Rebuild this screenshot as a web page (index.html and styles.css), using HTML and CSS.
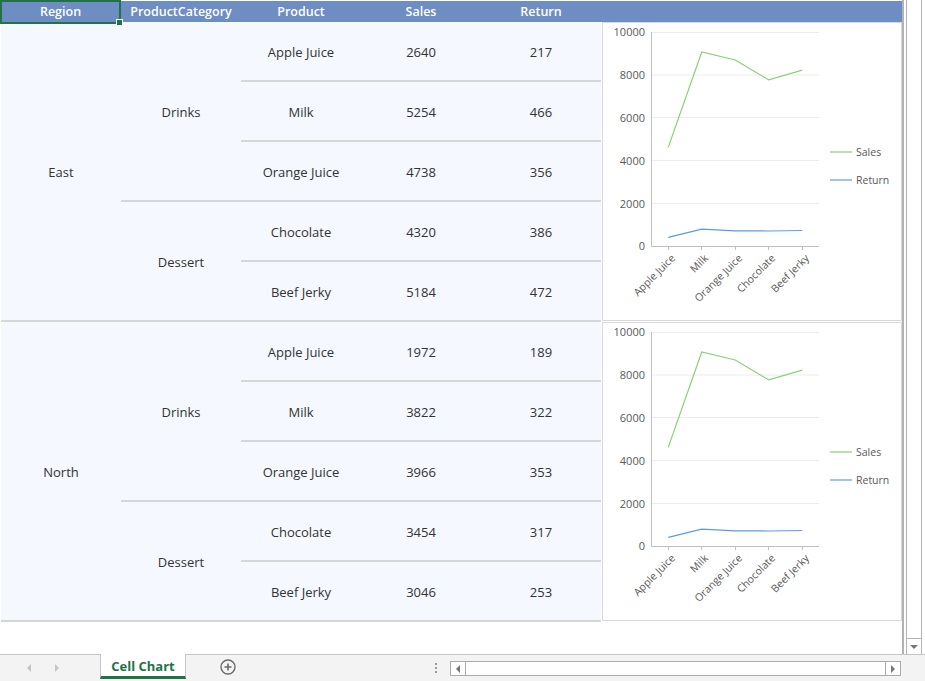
FILE: index.html
```html
<!DOCTYPE html>
<html>
<head>
    <title>Cell Chart</title>
    <link rel="stylesheet" href="styles.css">
</head>
<body>
    <div class="window">
        <div class="main">
            <div class="sheet">
                <div class="head">
                    <div class="hcell selected">Region<span class="handle"></span></div>
                    <div class="hcell">ProductCategory</div>
                    <div class="hcell">Product</div>
                    <div class="hcell">Sales</div>
                    <div class="hcell">Return</div>
                    <div class="hcell"></div>
                </div>

                <div class="group">
                    <div class="cell region">East</div>
                    <div class="cell cat span3">Drinks</div>
                    <div class="cell">Apple Juice</div>
                    <div class="cell">2640</div>
                    <div class="cell">217</div>
                    <div class="cell">Milk</div>
                    <div class="cell">5254</div>
                    <div class="cell">466</div>
                    <div class="cell">Orange Juice</div>
                    <div class="cell">4738</div>
                    <div class="cell">356</div>
                    <div class="cell cat span2">Dessert</div>
                    <div class="cell">Chocolate</div>
                    <div class="cell">4320</div>
                    <div class="cell">386</div>
                    <div class="cell">Beef Jerky</div>
                    <div class="cell">5184</div>
                    <div class="cell">472</div>
                    <div class="chart">
                        <svg class="plot" width="298" height="297" viewBox="0 1 298 297">
                            <g class="grid">
                                <line x1="48.5" y1="10.5" x2="216" y2="10.5"/>
                                <line x1="48.5" y1="53" x2="216" y2="53"/>
                                <line x1="48.5" y1="95.5" x2="216" y2="95.5"/>
                                <line x1="48.5" y1="138.5" x2="216" y2="138.5"/>
                                <line x1="48.5" y1="181.5" x2="216" y2="181.5"/>
                            </g>
                            <g class="axis">
                                <line x1="48.5" y1="10" x2="48.5" y2="224.5"/>
                                <line x1="48.5" y1="224.5" x2="216" y2="224.5"/>
                                <line x1="65.5" y1="224.5" x2="65.5" y2="228"/>
                                <line x1="98.5" y1="224.5" x2="98.5" y2="228"/>
                                <line x1="132.5" y1="224.5" x2="132.5" y2="228"/>
                                <line x1="165.5" y1="224.5" x2="165.5" y2="228"/>
                                <line x1="199.5" y1="224.5" x2="199.5" y2="228"/>
                            </g>
                            <g class="ylab">
                                <text x="42" y="9.5">10000</text>
                                <text x="42" y="52">8000</text>
                                <text x="42" y="95">6000</text>
                                <text x="42" y="138">4000</text>
                                <text x="42" y="181">2000</text>
                                <text x="42" y="223.5">0</text>
                            </g>
                            <polyline class="sales" points="65.25,125.4 98.75,30 132.25,38 165.75,57.9 199.25,48.1"/>
                            <polyline class="return" points="65.25,215.3 98.75,207.2 132.25,208.8 165.75,209 199.25,208.5"/>
                            <g class="xlab">
                                <text transform="translate(70,234) rotate(-45)">Apple Juice</text>
                                <text transform="translate(103,234) rotate(-45)">Milk</text>
                                <text transform="translate(137,234) rotate(-45)">Orange Juice</text>
                                <text transform="translate(170,234) rotate(-45)">Chocolate</text>
                                <text transform="translate(204,234) rotate(-45)">Beef Jerky</text>
                            </g>
                            <line class="sales" x1="227" y1="130" x2="249" y2="130"/>
                            <text class="legend" x="253" y="130">Sales</text>
                            <line class="return" x1="227" y1="158" x2="249" y2="158"/>
                            <text class="legend" x="253" y="158">Return</text>
                        </svg>
                    </div>
                </div>

                <div class="group">
                    <div class="cell region">North</div>
                    <div class="cell cat span3">Drinks</div>
                    <div class="cell">Apple Juice</div>
                    <div class="cell">1972</div>
                    <div class="cell">189</div>
                    <div class="cell">Milk</div>
                    <div class="cell">3822</div>
                    <div class="cell">322</div>
                    <div class="cell">Orange Juice</div>
                    <div class="cell">3966</div>
                    <div class="cell">353</div>
                    <div class="cell cat span2">Dessert</div>
                    <div class="cell">Chocolate</div>
                    <div class="cell">3454</div>
                    <div class="cell">317</div>
                    <div class="cell">Beef Jerky</div>
                    <div class="cell">3046</div>
                    <div class="cell">253</div>
                    <div class="chart">
                        <svg class="plot" width="298" height="297" viewBox="0 1 298 297">
                            <g class="grid">
                                <line x1="48.5" y1="10.5" x2="216" y2="10.5"/>
                                <line x1="48.5" y1="53" x2="216" y2="53"/>
                                <line x1="48.5" y1="95.5" x2="216" y2="95.5"/>
                                <line x1="48.5" y1="138.5" x2="216" y2="138.5"/>
                                <line x1="48.5" y1="181.5" x2="216" y2="181.5"/>
                            </g>
                            <g class="axis">
                                <line x1="48.5" y1="10" x2="48.5" y2="224.5"/>
                                <line x1="48.5" y1="224.5" x2="216" y2="224.5"/>
                                <line x1="65.5" y1="224.5" x2="65.5" y2="228"/>
                                <line x1="98.5" y1="224.5" x2="98.5" y2="228"/>
                                <line x1="132.5" y1="224.5" x2="132.5" y2="228"/>
                                <line x1="165.5" y1="224.5" x2="165.5" y2="228"/>
                                <line x1="199.5" y1="224.5" x2="199.5" y2="228"/>
                            </g>
                            <g class="ylab">
                                <text x="42" y="9.5">10000</text>
                                <text x="42" y="52">8000</text>
                                <text x="42" y="95">6000</text>
                                <text x="42" y="138">4000</text>
                                <text x="42" y="181">2000</text>
                                <text x="42" y="223.5">0</text>
                            </g>
                            <polyline class="sales" points="65.25,125.4 98.75,30 132.25,38 165.75,57.9 199.25,48.1"/>
                            <polyline class="return" points="65.25,215.3 98.75,207.2 132.25,208.8 165.75,209 199.25,208.5"/>
                            <g class="xlab">
                                <text transform="translate(70,234) rotate(-45)">Apple Juice</text>
                                <text transform="translate(103,234) rotate(-45)">Milk</text>
                                <text transform="translate(137,234) rotate(-45)">Orange Juice</text>
                                <text transform="translate(170,234) rotate(-45)">Chocolate</text>
                                <text transform="translate(204,234) rotate(-45)">Beef Jerky</text>
                            </g>
                            <line class="sales" x1="227" y1="130" x2="249" y2="130"/>
                            <text class="legend" x="253" y="130">Sales</text>
                            <line class="return" x1="227" y1="158" x2="249" y2="158"/>
                            <text class="legend" x="253" y="158">Return</text>
                        </svg>
                    </div>
                </div>
            </div>
            <div class="vscroll">
                <div class="vtrack"></div>
                <div class="vbtn"><span class="tri-down"></span></div>
            </div>
        </div>

        <div class="tabbar">
            <div class="nav">
                <span class="tri-left light"></span>
                <span class="tri-right light"></span>
            </div>
            <div class="tab">Cell Chart</div>
            <div class="addsheet">
                <svg width="16" height="16" viewBox="0 0 16 16">
                    <circle cx="8" cy="8" r="7" fill="none" stroke="#6b6b6b" stroke-width="1.4"/>
                    <path d="M8 4.5v7M4.5 8h7" stroke="#6b6b6b" stroke-width="1.6"/>
                </svg>
            </div>
            <div class="dots"><span></span><span></span><span></span></div>
            <div class="hscroll">
                <div class="hbtn"><span class="tri-left"></span></div>
                <div class="htrack"></div>
                <div class="hbtn right"><span class="tri-right"></span></div>
            </div>
        </div>
    </div>
</body>
</html>
```

FILE: styles.css
```css
body {
    margin: 0;
    font-family: "Open Sans", "Noto Sans", sans-serif;
    background: #fff;
}
.window {
    width: 925px;
    height: 681px;
    display: flex;
    flex-direction: column;
    overflow: hidden;
}
.main {
    height: 654px;
    display: flex;
}
.sheet {
    width: 902px;
    border-right: 2px solid #b3b3b3;
    padding-top: 1px;
}
.head {
    display: grid;
    grid-template-columns: 120px 120px 120px 120px 120px 300px;
    height: 21px;
    margin-left: 1px;
    background: #6d8dc3;
}
.hcell {
    color: #fff;
    font-size: 12.5px;
    font-weight: 600;
    line-height: 22px;
    text-align: center;
    position: relative;
}
.hcell.selected {
    margin: -1px 0 -1px -1px;
    border: 2px solid #217346;
    line-height: 20px;
}
.handle {
    position: absolute;
    right: -4px;
    bottom: -4px;
    width: 5px;
    height: 5px;
    background: #217346;
    border: 1px solid #fff;
}
.group {
    display: grid;
    grid-template-columns: 120px 120px 120px 120px 120px 300px;
    grid-template-rows: repeat(5, 60px);
    margin-left: 1px;
}
.cell {
    display: flex;
    align-items: center;
    justify-content: center;
    background: #f5f8fe;
    border-bottom: 2px solid #d6d6d6;
    font-size: 13px;
    color: #333;
    padding-top: 1px;
}
.region {
    grid-row: span 5;
}
.span3 {
    grid-row: span 3;
}
.span2 {
    grid-row: span 2;
}
.chart {
    grid-column: 6;
    grid-row: 1 / span 5;
    padding: 0 1px 1px 1px;
}
.plot {
    display: block;
    border: 1px solid #d9d9d9;
    background: #fff;
}
.grid line {
    stroke: #ececec;
    stroke-width: 1;
}
.axis line {
    stroke: #bfbfbf;
    stroke-width: 1;
}
.ylab text {
    font-size: 11px;
    fill: #595959;
    text-anchor: end;
    dominant-baseline: central;
}
.xlab text {
    font-size: 10.5px;
    fill: #595959;
    text-anchor: end;
    dominant-baseline: central;
}
.legend {
    font-size: 10.5px;
    fill: #595959;
    dominant-baseline: central;
}
.sales {
    fill: none;
    stroke: #8ccf78;
    stroke-width: 1.2;
}
.return {
    fill: none;
    stroke: #5a9de4;
    stroke-width: 1.2;
}
.vscroll {
    width: 14px;
    margin-left: 2px;
    border-left: 1px solid #b3b3b3;
    border-right: 1px solid #b3b3b3;
    display: flex;
    flex-direction: column;
}
.vtrack {
    flex: 1;
}
.vbtn {
    height: 15px;
    border-top: 1px solid #b3b3b3;
    display: flex;
    align-items: center;
    justify-content: center;
}
.tri-down {
    border-left: 4px solid transparent;
    border-right: 4px solid transparent;
    border-top: 4px solid #777;
}
.tri-left {
    border-top: 4px solid transparent;
    border-bottom: 4px solid transparent;
    border-right: 4px solid #777;
}
.tri-right {
    border-top: 4px solid transparent;
    border-bottom: 4px solid transparent;
    border-left: 4px solid #777;
}
.tri-left.light {
    border-right-color: #c4c4c4;
}
.tri-right.light {
    border-left-color: #c4c4c4;
}
.tabbar {
    height: 26px;
    border-top: 1px solid #c6c6c6;
    background: #f3f3f3;
    display: flex;
    align-items: flex-start;
}
.nav {
    width: 100px;
    height: 26px;
    display: flex;
    align-items: center;
    gap: 24px;
    padding-left: 27px;
    box-sizing: border-box;
}
.tab {
    width: 84px;
    height: 22px;
    margin-top: -1px;
    background: #fff;
    border: 1px solid #c6c6c6;
    border-top: none;
    border-bottom: 3px solid #217346;
    color: #217346;
    font-size: 13px;
    font-weight: 700;
    text-align: center;
    line-height: 24px;
}
.addsheet {
    margin: 4px 0 0 34px;
    height: 16px;
}
.addsheet svg {
    display: block;
}
.dots {
    margin: 8px 0 0 199px;
    display: flex;
    flex-direction: column;
    gap: 2px;
}
.dots span {
    width: 2px;
    height: 2px;
    background: #999;
}
.hscroll {
    margin: 6px 0 0 13px;
    width: 449px;
    height: 13px;
    border: 1px solid #ababab;
    background: #fff;
    display: flex;
}
.hbtn {
    width: 14px;
    border-right: 1px solid #ababab;
    display: flex;
    align-items: center;
    justify-content: center;
}
.hbtn.right {
    border-right: none;
    border-left: 1px solid #ababab;
}
.htrack {
    flex: 1;
}
```
